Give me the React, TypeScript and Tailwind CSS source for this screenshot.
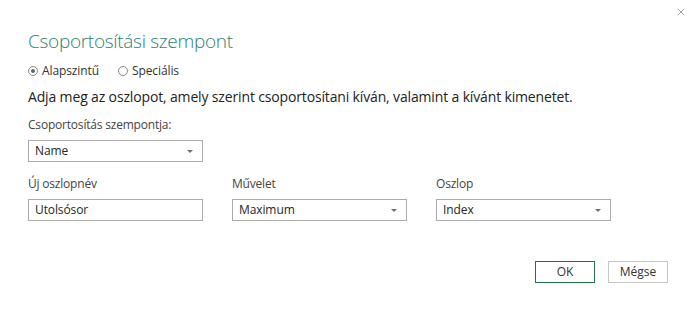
import { X } from "lucide-react";

const font = { fontFamily: '"Open Sans", "Noto Sans", sans-serif' };

function Caret() {
  return (
    <svg width="6" height="3" viewBox="0 0 6 3" className="shrink-0">
      <path d="M0 0h6L3 3z" fill="#707070" />
    </svg>
  );
}

function Select({ value }: { value: string }) {
  return (
    <div className="flex h-[22px] w-[175px] items-center justify-between border border-[#ababab] bg-white pl-[6px] pr-[9px] text-[12px] tracking-[-0.1px] text-[#262626]">
      <span>{value}</span>
      <Caret />
    </div>
  );
}

function Field({ label, children }: { label: string; children: React.ReactNode }) {
  return (
    <div className="flex w-[175px] flex-col gap-[6px]">
      <span className="text-[12px] leading-[18px] tracking-[-0.2px] text-[#444]">{label}</span>
      {children}
    </div>
  );
}

function Radio({ checked, label }: { checked?: boolean; label: string }) {
  return (
    <label className="flex items-center gap-[4px]">
      <span className="flex h-[10px] w-[10px] items-center justify-center rounded-full border border-[#8a8a8a] bg-white">
        {checked && <span className="h-[4px] w-[4px] rounded-full bg-[#666]" />}
      </span>
      <span>{label}</span>
    </label>
  );
}

export default function App() {
  return (
    <div className="relative h-[314px] w-[698px] bg-white" style={font}>
      <button className="absolute right-[11px] top-[6px] text-[#666]">
        <X size={12} strokeWidth={1.2} />
      </button>
      <div className="flex flex-col pl-[28px] pt-[28px]">
        <h1 className="text-[19px] font-light leading-[27px] tracking-[-0.3px] text-[#2e8270]">Csoportosítási szempont</h1>
        <div className="mt-[7px] flex items-center gap-[19px] text-[12px] tracking-[-0.1px] text-[#333]">
          <Radio checked label="Alapszintű" />
          <Radio label="Speciális" />
        </div>
        <p className="mt-[7px] text-[14px] leading-[20px] tracking-[-0.15px] text-[#222]">
          Adja meg az oszlopot, amely szerint csoportosítani kíván, valamint a kívánt kimenetet.
        </p>
        <div className="mt-[9px]">
          <Field label="Csoportosítás szempontja:">
            <Select value="Name" />
          </Field>
        </div>
        <div className="mt-[13px] flex gap-[29px]">
          <Field label="Új oszlopnév">
            <div className="flex h-[22px] w-[175px] items-center border border-[#ababab] bg-white pl-[6px] text-[12px] tracking-[-0.1px] text-[#262626]">
              Utolsósor
            </div>
          </Field>
          <Field label="Művelet">
            <Select value="Maximum" />
          </Field>
          <Field label="Oszlop">
            <Select value="Index" />
          </Field>
        </div>
        <div className="mt-[40px] flex justify-end gap-[13px] pr-[30px]">
          <button className="h-[22px] w-[60px] border border-[#217346] text-[12px] text-[#333]">OK</button>
          <button className="h-[22px] w-[60px] border border-[#c6c6c6] text-[12px] text-[#333]">Mégse</button>
        </div>
      </div>
    </div>
  );
}
